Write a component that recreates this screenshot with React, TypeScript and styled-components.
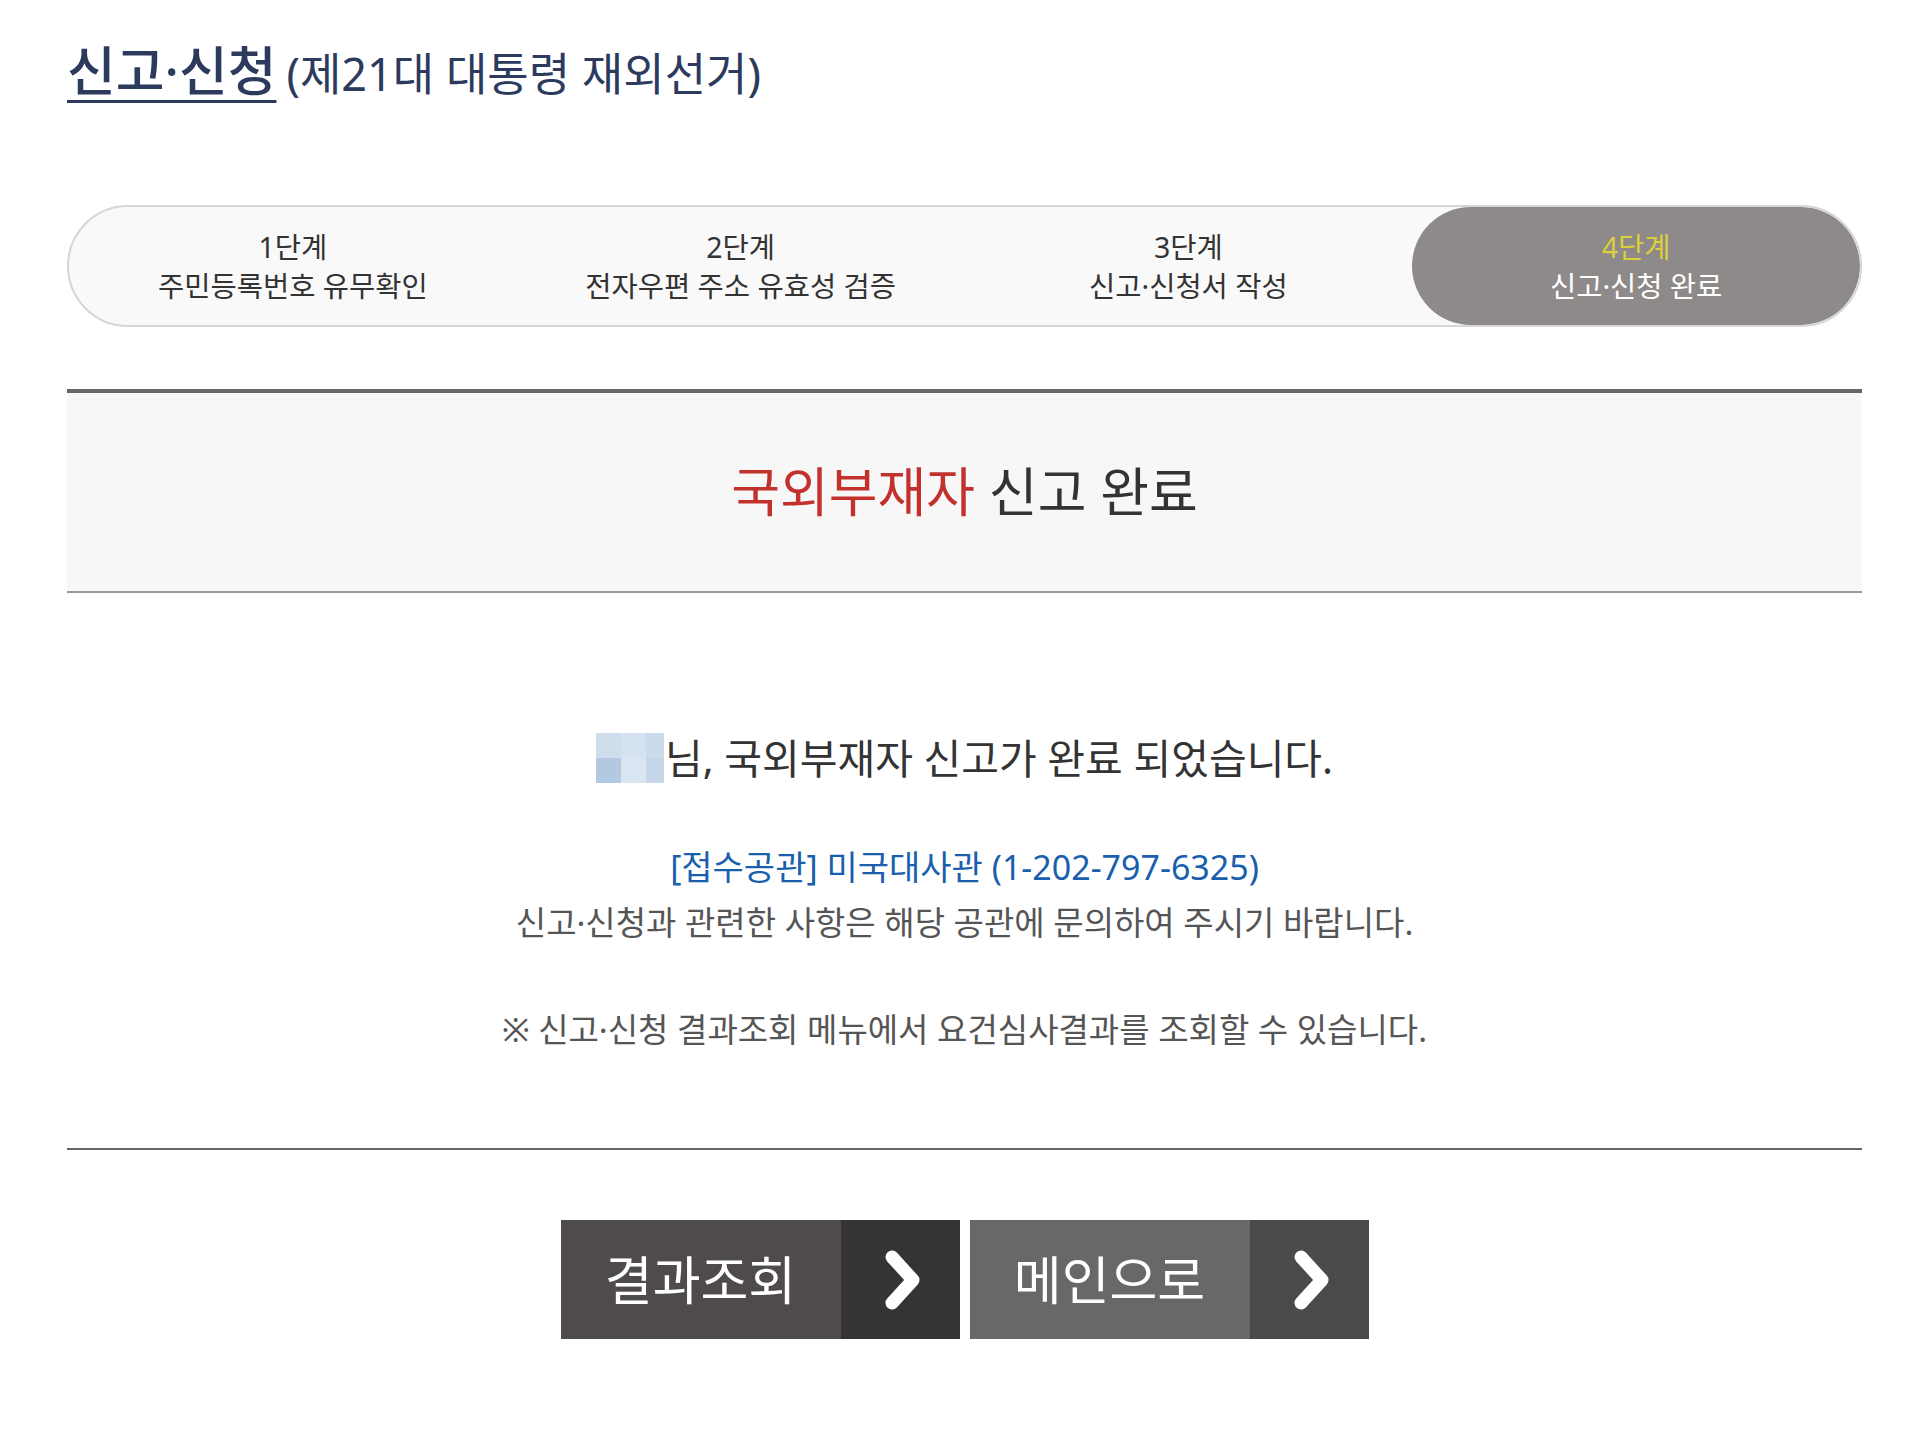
import React from 'react';
import styled, { createGlobalStyle } from 'styled-components';

const Global = createGlobalStyle`
body {
    margin: 0;
    background: #fff;
    font-family: "Noto Sans", "Noto Sans CJK KR", sans-serif;
    color: #333;
}
`

const Page = styled.div`
width: 1795px;
padding: 0 52px 80px 67px;
`

const Title = styled.h2`
margin: 0;
padding-top: 41px;
font-size: 45px;
font-weight: 400;
line-height: 60px;
color: #2c3a5e;
white-space: nowrap;
`

const TitleMain = styled.span`
font-size: 53px;
font-weight: 500;
text-decoration: underline;
text-decoration-thickness: 3px;
text-underline-offset: 9px;
margin-right: 10px;
`

const Steps = styled.ol`
list-style: none;
margin: 101px 0 0;
padding: 0;
height: 118px;
display: grid;
grid-template-columns: repeat(4, 1fr);
border: 2px solid #d6d6d6;
border-radius: 61px;
background: #f9f9f9;
overflow: hidden;
`

const Step = styled.li<{ $active?: boolean }>`
display: flex;
flex-direction: column;
align-items: center;
justify-content: center;
font-size: 28.5px;
line-height: 39px;
color: ${p => p.$active ? '#fff' : '#333'};
background: ${p => p.$active ? '#8e8a89' : 'transparent'};
border-radius: ${p => p.$active ? '61px' : '0'};
padding-top: 2px;
`

const StepNo = styled.span<{ $active?: boolean }>`
color: ${p => p.$active ? '#dccf3c' : 'inherit'};
`

const Banner = styled.div`
margin-top: 62px;
height: 198px;
border-top: 4px solid #666;
border-bottom: 2px solid #9a9a9a;
background: #f7f7f7;
display: flex;
align-items: center;
justify-content: center;
`

const BannerText = styled.h3`
margin: 0;
font-size: 53px;
font-weight: 400;
line-height: 70px;
color: #333;
`

const Red = styled.span`
color: #c3312d;
`

const Message = styled.div`
text-align: center;
`

const Greeting = styled.p`
margin: 140px 0 0;
font-size: 41px;
line-height: 50px;
color: #333;
display: flex;
justify-content: center;
align-items: center;
`

const Masked = styled.span`
display: inline-grid;
grid-template-columns: 25px 25px 18px;
grid-template-rows: 25px 25px;
margin-right: 1px;
`

const Pixel = styled.span<{ $c: string }>`
background: ${p => p.$c};
`

const Office = styled.p`
margin: 56px 0 0;
font-size: 34px;
line-height: 56px;
color: #1a5fae;
`

const Info = styled.p<{ $gap?: number }>`
margin: ${p => p.$gap ?? 0}px 0 0;
font-size: 33px;
line-height: 56px;
color: #555;
`

const Divider = styled.hr`
margin: 90px 0 0;
border: none;
border-top: 2px solid #666;
`

const Buttons = styled.div`
margin-top: 70px;
display: flex;
justify-content: center;
gap: 10px;
`

const Button = styled.a<{ $main: string; $side: string }>`
display: grid;
grid-template-columns: 280px 119px;
height: 119px;
color: #fff;
text-decoration: none;
cursor: pointer;

& > span:first-child {
    background: ${p => p.$main};
    display: flex;
    align-items: center;
    justify-content: center;
    font-size: 52px;
    padding-bottom: 4px;
}
& > span:last-child {
    background: ${p => p.$side};
    display: flex;
    align-items: center;
    justify-content: center;
    padding-left: 6px;
}
`

const Chevron = () => (
    <svg width="36" height="60" viewBox="0 0 36 60">
        <polyline points="7,7 28,30 7,53" fill="none" stroke="#fff" strokeWidth="13" strokeLinecap="round" strokeLinejoin="round" />
    </svg>
)

const steps = [
    ['1단계', '주민등록번호 유무확인'],
    ['2단계', '전자우편 주소 유효성 검증'],
    ['3단계', '신고·신청서 작성'],
    ['4단계', '신고·신청 완료'],
]

const pixels = ['#cfdeed', '#d5e2ef', '#cbdbeb', '#b3c9e1', '#d9e5f1', '#c5d6e9']

export default function App() {
    return (
        <>
            <Global />
            <Page>
                <Title>
                    <TitleMain>신고·신청</TitleMain>(제21대 대통령 재외선거)
                </Title>

                <Steps>
                    {steps.map(([no, label], i) => {
                        const active = i === steps.length - 1
                        return (
                            <Step key={no} $active={active}>
                                <StepNo $active={active}>{no}</StepNo>
                                <span>{label}</span>
                            </Step>
                        )
                    })}
                </Steps>

                <Banner>
                    <BannerText><Red>국외부재자</Red> 신고 완료</BannerText>
                </Banner>

                <Message>
                    <Greeting>
                        <Masked>
                            {pixels.map((c, i) => <Pixel key={i} $c={c} />)}
                        </Masked>
                        님, 국외부재자 신고가 완료 되었습니다.
                    </Greeting>
                    <Office>[접수공관] 미국대사관 (1-202-797-6325)</Office>
                    <Info>신고·신청과 관련한 사항은 해당 공관에 문의하여 주시기 바랍니다.</Info>
                    <Info $gap={51}>※ 신고·신청 결과조회 메뉴에서 요건심사결과를 조회할 수 있습니다.</Info>
                </Message>

                <Divider />

                <Buttons>
                    <Button $main="#4f4b4b" $side="#363432">
                        <span>결과조회</span>
                        <span><Chevron /></span>
                    </Button>
                    <Button $main="#686868" $side="#4a4a4a">
                        <span>메인으로</span>
                        <span><Chevron /></span>
                    </Button>
                </Buttons>
            </Page>
        </>
    )
}
